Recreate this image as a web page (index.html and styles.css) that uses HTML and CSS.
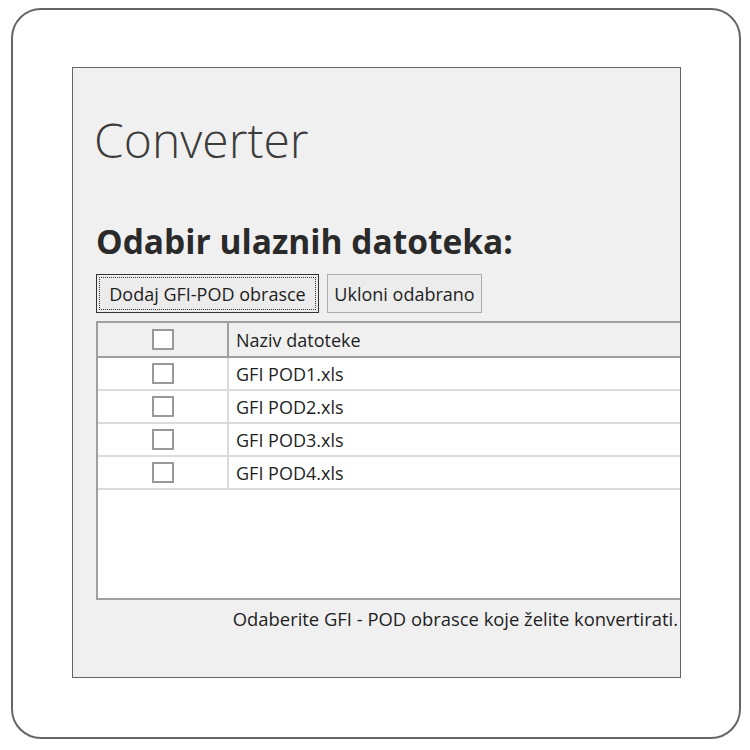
FILE: index.html
```html
<!DOCTYPE html>
<html lang="hr">
<head>
    <meta charset="UTF-8">
    <title>Converter</title>
    <link rel="stylesheet" href="styles.css">
</head>
<body>
    <div class="frame">
        <div class="window">
            <h1 class="title">Converter</h1>
            <h2 class="section">Odabir ulaznih datoteka:</h2>

            <div class="toolbar">
                <button class="btn btn-add btn-focus"><span>Dodaj GFI-POD obrasce</span></button>
                <button class="btn btn-remove">Ukloni odabrano</button>
            </div>

            <div class="grid">
                <div class="row head">
                    <div class="cell check"><span class="box"></span></div>
                    <div class="cell name">Naziv datoteke</div>
                </div>
                <div class="row">
                    <div class="cell check"><span class="box"></span></div>
                    <div class="cell name">GFI POD1.xls</div>
                </div>
                <div class="row">
                    <div class="cell check"><span class="box"></span></div>
                    <div class="cell name">GFI POD2.xls</div>
                </div>
                <div class="row">
                    <div class="cell check"><span class="box"></span></div>
                    <div class="cell name">GFI POD3.xls</div>
                </div>
                <div class="row">
                    <div class="cell check"><span class="box"></span></div>
                    <div class="cell name">GFI POD4.xls</div>
                </div>
                <div class="empty"></div>
            </div>

            <p class="hint">Odaberite GFI - POD obrasce koje želite konvertirati.</p>
        </div>
    </div>
</body>
</html>
```

FILE: styles.css
```css
body {
    margin: 0;
    background: #fff;
    font-family: 'Open Sans', sans-serif;
    color: #1e1e1e;
}

.frame {
    box-sizing: border-box;
    width: 730px;
    height: 731px;
    margin: 8px 0 0 11px;
    padding: 57px 0 0 59px;
    border: 2px solid #666;
    border-radius: 30px;
}

.window {
    box-sizing: border-box;
    width: 609px;
    height: 611px;
    padding: 0 0 0 23px;
    background: #f0f0f0;
    border: 1px solid #646464;
    overflow: hidden;
}

.title {
    margin: 42px 0 0 -2px;
    font-size: 48px;
    line-height: 60px;
    font-weight: 300;
    color: #3c3c3c;
}

.section {
    margin: 51px 0 0 0;
    font-size: 33.5px;
    line-height: 40px;
    font-weight: bold;
    color: #2a2a2a;
}

.toolbar {
    display: flex;
    gap: 8px;
    margin-top: 13px;
}

.btn {
    height: 39px;
    padding: 0;
    background: #ececec;
    border: 1px solid #adadad;
    font-family: 'Open Sans', sans-serif;
    font-size: 18px;
    color: #1e1e1e;
}

.btn-add {
    width: 223px;
}

.btn-remove {
    width: 155px;
}

.btn-focus {
    border: 1px solid #333;
    padding: 2px;
}

.btn-focus span {
    display: flex;
    align-items: center;
    justify-content: center;
    height: 100%;
    box-sizing: border-box;
    border: 1px dotted #333;
}

.grid {
    width: 620px;
    margin-top: 8px;
    background: #fff;
    border-top: 2px solid #a0a0a0;
    border-left: 2px solid #a0a0a0;
    border-bottom: 2px solid #a0a0a0;
}

.row {
    display: flex;
    height: 31px;
    border-bottom: 2px solid #dcdcdc;
}

.row.head {
    height: 33px;
    background: #f0f0f0;
    border-bottom: 2px solid #a0a0a0;
}

.cell {
    display: flex;
    align-items: center;
    font-size: 18px;
}

.check {
    width: 129px;
    justify-content: center;
    border-right: 2px solid #dcdcdc;
}

.head .check {
    border-right-color: #a0a0a0;
}

.name {
    padding-left: 7px;
}

.box {
    box-sizing: border-box;
    width: 22px;
    height: 21px;
    background: #fff;
    border: 2px solid #999;
}

.empty {
    height: 108px;
}

.hint {
    margin: 6px 0 0 0;
    padding-right: 2px;
    text-align: right;
    font-size: 18.4px;
}
```
